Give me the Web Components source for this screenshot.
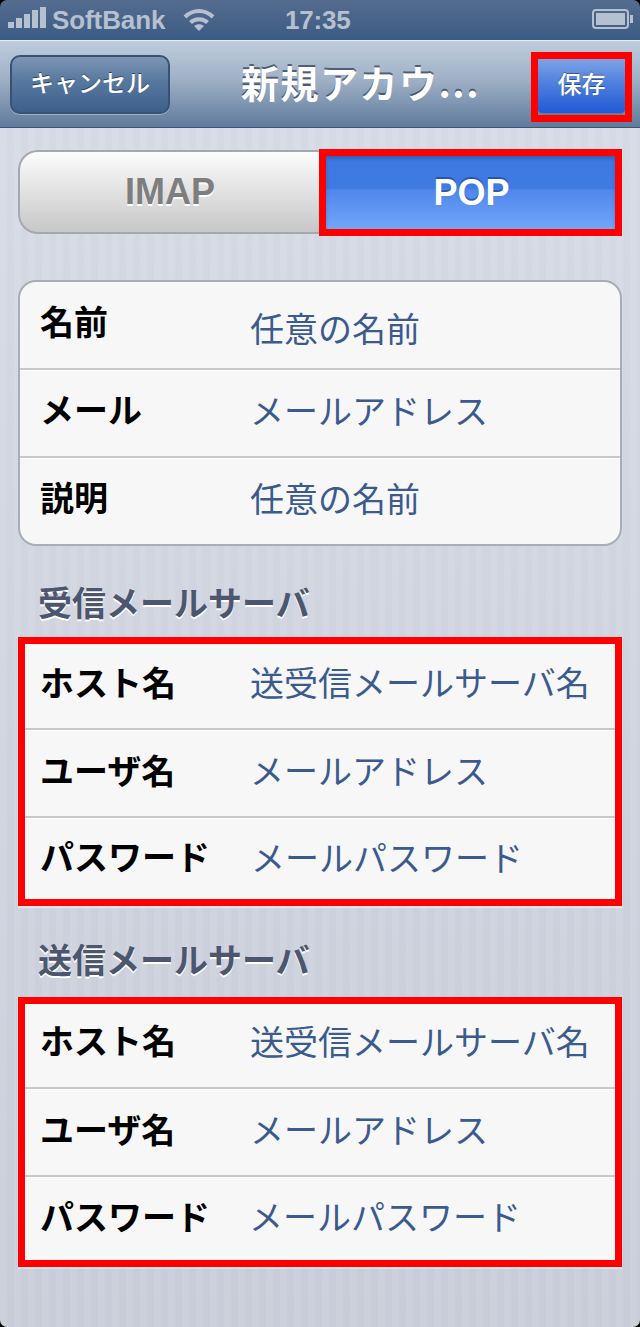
<!DOCTYPE html>
<html lang="ja">
<head>
<meta charset="utf-8">
<style>
  html, body { margin: 0; padding: 0; }
  body { width: 640px; height: 1327px; overflow: hidden; font-family: "Liberation Sans", "Noto Sans CJK JP", sans-serif; }
</style>
</head>
<body>
<ios-screen>
  <status-bar></status-bar>
  <nav-bar title="新規アカウ..."></nav-bar>
  <seg-control></seg-control>
  <form-group style="--top:44px">
    <form-row label="名前" value="任意の名前" style="--h:88px;--l:78px;--v:92px"></form-row>
    <form-row label="メール" value="メールアドレス" style="--h:88px;--l:78px;--v:80px"></form-row>
    <form-row label="説明" value="任意の名前" style="--h:86px;--l:78px;--v:80px"></form-row>
  </form-group>
  <form-group heading="受信メールサーバ" marked style="--top:33px;--gap:13px">
    <form-row label="ホスト名" value="送受信メールサーバ名" style="--h:86px;--l:75px;--v:76px"></form-row>
    <form-row label="ユーザ名" value="メールアドレス" style="--h:88px;--l:80px;--v:80px"></form-row>
    <form-row label="パスワード" value="メールパスワード" style="--h:81px;--l:76px;--v:78px;--vx:1px"></form-row>
  </form-group>
  <form-group heading="送信メールサーバ" marked style="--top:30px;--gap:16px">
    <form-row label="ホスト名" value="送受信メールサーバ名" style="--h:85px;--l:72px;--v:74px"></form-row>
    <form-row label="ユーザ名" value="メールアドレス" style="--h:88px;--l:80px;--v:80px"></form-row>
    <form-row label="パスワード" value="メールパスワード" style="--h:83px;--l:78px;--v:77px;--vx:-1px"></form-row>
  </form-group>
</ios-screen>

<script>
class IosScreen extends HTMLElement {
  constructor() {
    super();
    this.attachShadow({ mode: "open" });
    this.shadowRoot.innerHTML = `
      <style>
        :host {
          display: flex;
          flex-direction: column;
          position: relative;
          width: 640px;
          height: 1327px;
          background:
            repeating-linear-gradient(90deg, rgba(255,255,255,0.035) 0 7px, rgba(120,130,160,0.025) 7px 14px),
            linear-gradient(180deg, #d9dde7 0%, #c9ceda 100%);
        }
        /* black screen corners */
        .corners {
          position: absolute;
          inset: 0;
          pointer-events: none;
          border-radius: 7px;
          box-shadow: 0 0 0 8px #000;
          clip-path: inset(0);
        }
      </style>
      <slot></slot>
      <div class="corners"></div>
    `;
  }
}

class StatusBar extends HTMLElement {
  constructor() {
    super();
    this.attachShadow({ mode: "open" });
    this.shadowRoot.innerHTML = `
      <style>
        :host {
          display: flex;
          align-items: center;
          box-sizing: border-box;
          height: 41px;
          padding: 0 0 0 8px;
          position: relative;
          color: #b5c0d0;
          font: bold 26px "Liberation Sans", sans-serif;
          background: linear-gradient(180deg, #546d8f 0%, #3c5a82 100%);
          border-bottom: 1px solid #e8edf3;
        }
        .bars { display: flex; align-items: flex-end; gap: 2px; height: 22px; margin: 0 6px 6px 0; }
        .bars i { width: 6px; background: #b5c0d0; display: block; }
        .carrier { width: 125px; letter-spacing: -0.1px; }
        svg { display: block; }
        .wifi { margin-left: 6px; }
        .time { position: absolute; left: 285px; top: 5px; line-height: 30px; letter-spacing: -0.2px; }
        .batt { position: absolute; left: 592px; top: 9px; }
      </style>
      <div class="bars">
        <i style="height:6px"></i><i style="height:10px"></i><i style="height:14px"></i><i style="height:18px"></i><i style="height:21px"></i>
      </div>
      <span class="carrier">SoftBank</span>
      <svg class="wifi" width="32" height="24" viewBox="0 0 32 24" fill="none" stroke="#b5c0d0" stroke-width="4">
        <path d="M2 9 C10 1 22 1 30 9"/>
        <path d="M7.5 14.5 C12 10 20 10 24.5 14.5"/>
        <path d="M16 23 L11 18 C14 15.5 18 15.5 21 18 Z" fill="#b5c0d0" stroke="none"/>
      </svg>
      <span class="time">17:35</span>
      <svg class="batt" width="42" height="20" viewBox="0 0 42 20">
        <rect x="1" y="1" width="35" height="18" rx="3" fill="none" stroke="#b5c0d0" stroke-width="2"/>
        <rect x="4" y="4" width="29" height="12" fill="#b5c0d0"/>
        <rect x="38" y="6" width="3" height="8" fill="#b5c0d0"/>
      </svg>
    `;
  }
}

class NavBar extends HTMLElement {
  constructor() {
    super();
    this.attachShadow({ mode: "open" });
    this.shadowRoot.innerHTML = `
      <style>
        :host {
          display: flex;
          align-items: center;
          box-sizing: border-box;
          height: 87px;
          padding: 0 8px 0 10px;
          position: relative;
          background: linear-gradient(180deg, #bfccdc 0%, #9fb0c6 45%, #5f7a9b 100%);
          border-bottom: 1px solid #3f5472;
          font-family: "Noto Sans CJK JP", sans-serif;
          color: #fff;
        }
        .cancel {
          box-sizing: border-box;
          width: 160px;
          height: 59px;
          margin-top: 0;
          padding-bottom: 5px;
          border: 2px solid #3a5272;
          border-radius: 10px;
          background: linear-gradient(180deg, #7c95b4 0%, #56779e 45%, #3e5f8c 100%);
          box-shadow: 0 1px 0 rgba(255,255,255,0.35);
          display: flex;
          align-items: center;
          justify-content: center;
          font-size: 24px;
          font-weight: 500;
          text-shadow: 0 -1px 0 rgba(0,0,0,0.5);
        }
        .title {
          flex: 1;
          text-align: center;
          font-size: 38px;
          font-weight: 700;
          line-height: 50px;
          letter-spacing: 1.5px;
          white-space: nowrap;
          text-shadow: 0 -2px 0 rgba(40,55,80,0.7);
          padding-left: 20px;
          margin-top: -4px;
        }
        .save-mark {
          box-sizing: border-box;
          width: 101px;
          height: 70px;
          margin-top: 5px;
          border: 7px solid #f00;
          display: flex;
        }
        .save {
          flex: 1;
          padding-bottom: 7px;
          background: linear-gradient(180deg, #7ea3e6 0%, #4f7fdd 45%, #2259d6 100%);
          border-bottom: 2px solid #6a7d96;
          border-radius: 0 0 5px 5px;
          display: flex;
          align-items: center;
          justify-content: center;
          font-size: 24px;
          font-weight: 500;
          text-shadow: 0 -1px 0 rgba(0,0,0,0.4);
        }
      </style>
      <div class="cancel">キャンセル</div>
      <div class="title"></div>
      <div class="save-mark"><div class="save">保存</div></div>
    `;
  }
  connectedCallback() {
    this.shadowRoot.querySelector(".title").textContent = this.getAttribute("title");
  }
}

class SegControl extends HTMLElement {
  constructor() {
    super();
    this.attachShadow({ mode: "open" });
    this.shadowRoot.innerHTML = `
      <style>
        :host {
          display: flex;
          margin: 21px 18px 0 18px;
          height: 87px;
          font: bold 36px "Liberation Sans", sans-serif;
        }
        .imap {
          box-sizing: border-box;
          flex: 1;
          height: 84px;
          margin-top: 1px;
          padding-left: 1px;
          border: 2px solid #a5a8ae;
          border-right: 0;
          border-radius: 20px 0 0 20px;
          background: linear-gradient(180deg, #fcfcfc 0%, #ececec 30%, #c7c7c7 100%);
          color: #7e7e7e;
          text-shadow: 0 2px 0 #fff;
          display: flex;
          align-items: center;
          justify-content: center;
        }
        .pop-mark {
          box-sizing: border-box;
          width: 303px;
          height: 87px;
          border: 7px solid #f00;
          display: flex;
        }
        .pop {
          flex: 1;
          padding-left: 2px;
          background: linear-gradient(180deg, #3d78e0 0%, #3f7be2 45%, #4f86ea 46%, #72a6fa 100%);
          box-shadow: inset 0 3px 3px rgba(30,60,130,0.35);
          color: #fff;
          text-shadow: 0 -2px 0 rgba(30,70,150,0.7);
          display: flex;
          align-items: center;
          justify-content: center;
        }
      </style>
      <div class="imap">IMAP</div>
      <div class="pop-mark"><div class="pop">POP</div></div>
    `;
  }
}

class FormGroup extends HTMLElement {
  constructor() {
    super();
    this.attachShadow({ mode: "open" });
    this.shadowRoot.innerHTML = `
      <style>
        :host { display: block; margin: 0 18px; padding-top: var(--top, 44px); }
        h2 {
          margin: 0 0 var(--gap, 12px) 20px;
          font: 700 34px/45px "Noto Sans CJK JP", sans-serif;
          color: #4c566e;
          text-shadow: 0 2px 0 #fff;
          display: none;
        }
        :host([heading]) h2 { display: block; }
        .box {
          box-sizing: border-box;
          background: #f7f7f7;
          border: 2px solid #a9adb5;
          border-radius: 18px;
          overflow: hidden;
          --pad: 20px;
          --label: 210px;
        }
        :host([marked]) .box {
          border: 7px solid #f00;
          border-radius: 0;
          box-shadow: 0 2px 0 rgba(255,255,255,0.45);
          overflow: visible;
          --pad: 15px;
          --label: 210px;
        }
        ::slotted(form-row:not(:last-child)) {
          border-bottom: 2px solid #c8c8c8;
          box-shadow: 0 1px 0 #fff;
        }
      </style>
      <h2></h2>
      <div class="box"><slot></slot></div>
    `;
  }
  connectedCallback() {
    this.shadowRoot.querySelector("h2").textContent = this.getAttribute("heading") || "";
  }
}

class FormRow extends HTMLElement {
  constructor() {
    super();
    this.attachShadow({ mode: "open" });
    this.shadowRoot.innerHTML = `
      <style>
        :host {
          display: flex;
          box-sizing: border-box;
          height: var(--h, 88px);
          padding-left: var(--pad, 16px);
          font-family: "Noto Sans CJK JP", sans-serif;
        }
        .label { width: var(--label, 210px); font-size: 34px; font-weight: 700; line-height: var(--l, 76px); color: #000; white-space: nowrap; }
        .value { margin-left: var(--vx, 0); font-size: 34px; font-weight: 400; line-height: var(--v, 78px); color: #3b5a8e; white-space: nowrap; }
      </style>
      <div class="label"></div>
      <div class="value"></div>
    `;
  }
  connectedCallback() {
    this.shadowRoot.querySelector(".label").textContent = this.getAttribute("label");
    this.shadowRoot.querySelector(".value").textContent = this.getAttribute("value");
  }
}

customElements.define("ios-screen", IosScreen);
customElements.define("status-bar", StatusBar);
customElements.define("nav-bar", NavBar);
customElements.define("seg-control", SegControl);
customElements.define("form-group", FormGroup);
customElements.define("form-row", FormRow);
</script>
</body>
</html>
